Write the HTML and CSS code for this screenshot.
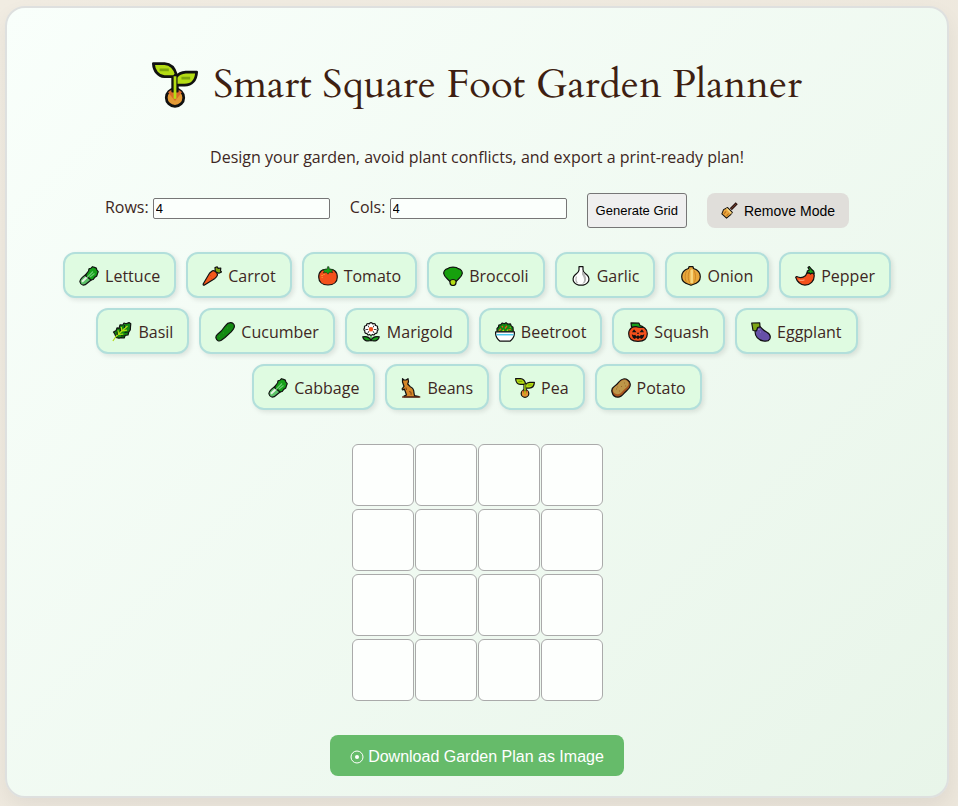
FILE: index.html
```
<!DOCTYPE html>
<html lang="en">
<head>
  <meta charset="UTF-8">
  <meta name="viewport" content="width=device-width, initial-scale=1.0">
  <title>Smart Square Foot Garden Planner</title>
  <link rel="stylesheet" href="styles.css">
</head>
<body>
  <svg class="sprite" aria-hidden="true">
    <symbol id="seedling" viewBox="0 0 20 20">
      <circle cx="10" cy="15.5" r="3.8" fill="#e39a35"/>
      <path d="M7 13.2a4 4 0 0 1 6 0L10 17z" fill="#d9692a" stroke="none"/>
      <path d="M9 6.5v6.2h2V10.3" fill="#b4dc14"/>
      <path d="M.6.7h4.900c2.600.2 4.300 2 5 4.600L9.500 6.400H5.400C2.600 6.200.8 3.800.6.7z" fill="#b4dc14"/>
      <path d="M19.400 4.400h-4.700c-2.200.1-3.400 1-4.200 2.200v3.500h3.700c3.100 0 5-2.200 5.200-5.700z" fill="#b4dc14"/>
      <path d="M10 6.200V16" stroke="#b4dc14" stroke-width="1.200"/>
      <path d="M3.300 3.400h4M12.800 7h3.800" stroke="#7fa60c"/>
    </symbol>
    <symbol id="lettuce" viewBox="0 0 20 20">
      <path d="M1 16c-.5-1.800.6-3 2.300-4.600L8.500 7l5.500 5.500-5.300 4.200c-1.600 1.500-3.200 2.600-5 2.300-1.400-.2-2.400-1.500-2.700-3z" fill="#5ec26a"/>
      <path d="M3 15.700L9 10" stroke="#e8f4e4" stroke-width="2"/>
      <path d="M6.500 9.500L8 7l1.500-2 .5-2.200 2-.6 1.500-1.500 2 .7 1.800.7.600 1.900 1.300 1.700-.8 2.200-.6 2-1.900 1.300-1.700 2.300-2.200.5z" fill="#16a01a"/>
      <path d="M8 11.500L14 5.500M11 11l4.500-3.500" stroke="#6acb72"/>
    </symbol>
    <symbol id="carrot" viewBox="0 0 20 20">
      <path d="M13.300 5.800L13 1.600l2.200-.8 1 1.500 2.600-.3-.3 2.800 1 1.200-2.600 1.300z" fill="#7da514"/>
      <path d="M9.800 5.200c2-1.500 6.400 1.500 5.500 4.200-.3 1-1.400 2.100-2.400 3L2.500 19c-.9.500-1.600-.1-1.200-1.200L7.500 7.200z" fill="#f4581c"/>
      <path d="M8 9.200l1.300.9M10.300 13.300l-1-1.200" stroke="#cf3d10" stroke-width=".7"/>
    </symbol>
    <symbol id="tomato" viewBox="0 0 20 20">
      <path d="M10 3.500c5.500-1.200 9.300 2 9.300 7.500 0 5-3.600 8-9.300 8S.7 16 .7 11c0-5.500 3.800-8.700 9.300-7.500z" fill="#f4501c"/>
      <path d="M9.200 3L9.500.7h1.500L11.300 3l4 .5-1.500 1.500 1 1.600-3.300-.4L10 8.200 8.300 6.300l-3 .8.900-2-1.500-1.300z" fill="#16a01a" stroke-width=".5"/>
      <path d="M3.500 9.500h1.200M5.500 8.300h1M3.700 11.500h.8" stroke="#ffb43c"/>
    </symbol>
    <symbol id="broccoli" viewBox="0 0 20 20">
      <path d="M4.800 2.600C6.500.6 13.500.6 15.200 2.600 18 3 19.600 5.500 19.200 7.800 19 10.300 16.500 12 14.500 14l-2 2h-5L5.500 14C3.500 12 1 10.300.8 7.800.4 5.500 2 3 4.800 2.600z" fill="#16a00d"/>
      <path d="M7 15c1-2 5-2 6 0v1.500a3 3 0 0 1-6 0z" fill="#b4dc14"/>
    </symbol>
    <symbol id="garlic" viewBox="0 0 20 20">
      <path d="M8 .7h4V4c.2 2.500 2 3.300 4 5 2.300 2 2.500 5.500.8 7.300C15.500 18 12.500 19.200 10 19.200S4.500 18 3.200 16.300C1.500 14.500 1.700 11 4 9c2-1.700 3.800-2.500 4-5z" fill="#fff"/>
      <path d="M14.300 9.500c1.500 3 1 5.800-.8 7.500l-2.500 1c3-2.500 2.500-6 0-9.500V4z" fill="#b4b4b4" stroke="none"/>
      <path d="M5.500 10.500c-1 2.500-.5 5 1 6.500" stroke="#b4b4b4"/>
    </symbol>
    <symbol id="onion" viewBox="0 0 20 20">
      <path d="M8 .7h4l.5 1.800c4 1.200 6.800 4.500 6.800 8.300 0 4-3 6.700-7.300 7.700l-2 .8-2-.8C3.700 17.500.7 14.800.7 10.800c0-3.800 2.800-7.100 6.800-8.300z" fill="#e8a83c"/>
      <path d="M9.500 3C6.500 7.500 6.500 13.500 9.500 18M13 4.500c2 3.500 2 9 0 12.500M6 4.500c-2.500 3.500-2.500 9 0 12.500" stroke="#c77e1e" stroke-width=".8"/>
      <path d="M10.700 3.500V17" stroke="#f8d77e" stroke-width="2.500"/>
    </symbol>
    <symbol id="pepper" viewBox="0 0 20 20">
      <path d="M.7 11.300l1-.8c3 1.500 6.500 1 8.700-.7 1.200-1.200 1.100-3 2.300-3.900 2-1.200 6.300.2 6.500 3.500.3 5.500-4 9.700-9.300 9.700-4.300 0-8-3.600-9.200-7.800z" fill="#f4501c"/>
      <path d="M12.300 7.200V5l2-1L13 1.400 14.300.6l2.500 3c1.700.9 2.600 2.500 2.300 4.200l-2-.8-1.600 1.100-1.400-1.300z" fill="#16a01a"/>
      <path d="M3.500 13.700c1.500.8 4 1 6 0" stroke="#ff9468"/>
    </symbol>
    <symbol id="basil" viewBox="0 0 20 20">
      <path d="M4 15.500l-.8-2.700L1.500 10l2.700-1.500.8-2.700 2 .5 1-3.500 2.800.2L12 1l2 .7L17 .6l1.800 1.200-.3 3-.2 3-1.500 2.200-.8 3-2.800.3-1 2.700-3-.3L7 16.200z" fill="#138a12"/>
      <path d="M.9 19l3-4.500L15.500 4M6.500 12.300l-.5-4M9.800 9l-.5-4M6.800 12.500l4.500-.3M10.500 8.800l4.500-.6" stroke="#b4dc14"/>
      <path d="M5 9.500l.3 3.500M8 6l.5 3M12.500 3l-.2 3M9 13.800l3.500.2M12.500 10.500l4-.5" stroke-width=".9"/>
    </symbol>
    <symbol id="cucumber" viewBox="0 0 20 20">
      <path d="M1 16.200c-.5-1.800.4-3 1.600-4L6.300 9 10.500 3.600c1.200-1.700 3.300-3.100 5.500-2.900 2.400.2 3.900 2.300 3.200 4.700-.6 1.900-2 3.200-3.300 4.700L10 15.500l-3.700 2.800c-2.300 1.500-4.700.4-5.300-2.100z" fill="#138a12"/>
      <path d="M4.500 14.200h.5M8 11h.5M12 6h.5" stroke="#62bc4d" stroke-width=".7"/>
    </symbol>
    <symbol id="marigold" viewBox="0 0 20 20">
      <path d="M10 12v6" stroke="#16a01a"/>
      <path d="M10 18.500c-4.500 1.300-8-.5-8.300-3.700 4-.7 7 .4 8.300 3.700zM10 18.500c4.500 1.300 8-.5 8.300-3.700-4-.7-7 .4-8.300 3.700z" fill="#16a01a"/>
      <path d="M8.300 1.800Q10-.4 11.700 1.800q2.800-.8 2.800 1.700 2.900.3 1.900 2.500 1.500 1.500-.2 2.800.4 2.700-2.200 2.700-.8 2.300-2.700 1-1.300 1.700-2.600 0-1.900 1.300-2.700-1-2.600 0-2.200-2.700Q2.100 7.500 3.600 6q-1-2.200 1.900-2.500 0-2.500 2.800-1.700z" fill="#fff"/>
      <path d="M7 3.500l1 2M13 3.500l-1 2M4.500 7.500h2.500M13 7.500h2.500M7 11l1-2M13 11l-1-2" stroke-width=".8"/>
      <circle cx="10" cy="7.200" r="2.200" fill="#f4501c" stroke="none"/>
    </symbol>
    <symbol id="beetroot" viewBox="0 0 20 20">
      <path d="M2 10V6.500L3.500 5 3.800 3l2-.3L7.300 1l2 .8L11 .7l2 1.500 2.500-.3.700 2L18 5.300 18.300 10z" fill="#138a12"/>
      <path d="M4 8.700l2-2M10 6.500l2-2.700M13.500 8l2.300-.7M7 4l.8 1.300" stroke="#f4581c" stroke-width="1.300"/>
      <path d="M7.500 9l1.500-1M12 9l1-1.500M15 5l.5.5" stroke="#b4dc14"/>
      <path d="M.6 9.800h18.800c.3 4.200-1.400 7.300-4.400 9.400H5C2 17.100.3 14 .6 9.800z" fill="#fff"/>
      <path d="M1.400 12.700h17.200" stroke="#48c8ec" stroke-width="1.500"/>
    </symbol>
    <symbol id="squash" viewBox="0 0 20 20">
      <path d="M10 4.500c5.500-.8 9.300 2.200 9.300 7.200s-3.800 7.600-9.300 7.600S.7 16.700.7 11.700 4.500 3.700 10 4.500z" fill="#f4501c"/>
      <path d="M3 .9l8 .3 1 2.300c1.500.3 2.700.8 3.300 2-3.300 0-5.800-.2-7.500-1L3.500 5z" fill="#16a01a"/>
      <path d="M6 7.300l2.500 3H4zM14 7.300l2 3h-4.500zM10 10l1 2H9zM3.800 12.300l2 1 1.500-.5 1 1.700 1.700-1.200 1.800 1.200 1-1.700 1.500.5 2-1c-.3 2.700-1.500 4.200-3.300 4.700l-1-1.500-2 1.700-2-1.700-1 1.500c-1.800-.5-2.900-2-3.200-4.700z" fill="#111" stroke="none"/>
    </symbol>
    <symbol id="eggplant" viewBox="0 0 20 20">
      <path d="M5 5.500C7 3.300 9.300 4.500 10.800 6.300c1.500 1.800 3 2.700 5.100 3.900 3.200 1.800 4 4.100 2.900 6.800-1 2-3.200 2.400-5.600 2.100C7.500 18.500 3.200 14 4.200 8z" fill="#6650a8"/>
      <path d="M.7 1L8.700.9 9 4.800 6.600 5.500 5.500 8.800 2 8.500l-.5-3z" fill="#7da514"/>
      <path d="M7.500 7.500h.8M9 10h.5" stroke="#c2b4f0"/>
    </symbol>
    <symbol id="beans" viewBox="0 0 20 20">
      <path d="M1.500.7L3 2h2L7 .7 7.500 3.800 6.700 6l2.500 2.700c2.500 1 3.800 3.500 3.800 6.300l.5 2.700 4.500.8v.5H3v-1l2.500-1-1.200-3.500L3.300 11l-1.500 1L1 11l2-2.700L1.500 4z" fill="#d68628"/>
      <path d="M5 9.500L5.500 12M8 13.500c1.700 0 2.500 1.200 2 3.500" stroke="#8c4b18"/>
      <path d="M1 19h18.300" stroke="#6a2b15" stroke-width="1.300"/>
    </symbol>
    <symbol id="potato" viewBox="0 0 20 20">
      <path d="M1 14c-.6-2.300.2-4.200 2-5.300 2.500-1.600 3.700-3.200 5.300-5.200C10.500.8 14 .1 16.700 2c2.800 2 3.300 5.300 1.500 8-1.400 2-3.500 3.400-5 5.200-1.600 2-3.500 4-6.300 4-3 0-5.200-2.200-5.900-5.200z" fill="#a9561f"/>
      <path d="M2 12.500c.1-3.800 3.500-3.900 5.500-6.700C9.300 3.300 11.500 1.500 14 2c3 .6 4.500 3.200 3.200 5.500-1.300 2.200-3.600 3.300-5.400 5.400-1.600 1.900-3.300 3.600-5.800 3.300-2-.2-3.900-1.700-4-3.700z" fill="#bd9648" stroke="none"/>
      <path d="M5 11h.6M8 13h.6M10 8.500h.6M13 5h.6M14.500 8h.6M6.500 9h.6" stroke="#8c4b18"/>
    </symbol>
    <symbol id="broom" viewBox="0 0 20 20">
      <path d="M11.500 8.500L18.500 1.500" stroke="#2c1714" stroke-width="3.500"/>
      <path d="M12 8L18 2" stroke="#7d3f26" stroke-width="1"/>
      <path d="M7.800 6.500l5.500 5.700-1.800 2.600L6.500 19 1 14l2-5z" fill="#eba63c"/>
      <path d="M6.500 7.500l5.800 6" stroke="#f7dc8e" stroke-width="1.500"/>
      <path d="M3.500 14l2.500-3M6.500 16.300L9 13.500" stroke="#b96e1c"/>
    </symbol>
  </svg>

  <div class="container">
    <h1><svg><use href="#seedling"/></svg>Smart Square Foot Garden Planner</h1>
    <p class="intro">Design your garden, avoid plant conflicts, and export a print-ready plan!</p>

    <div class="controls">
      <label>Rows: <input type="number" id="rows" value="4" min="1"></label>
      <label>Cols: <input type="number" id="cols" value="4" min="1"></label>
      <button class="generate" onclick="generateGrid()">Generate Grid</button>
      <button class="remove"><svg><use href="#broom"/></svg>Remove Mode</button>
    </div>

    <div class="plants">
      <button class="plant"><svg><use href="#lettuce"/></svg>Lettuce</button>
      <button class="plant"><svg><use href="#carrot"/></svg>Carrot</button>
      <button class="plant"><svg><use href="#tomato"/></svg>Tomato</button>
      <button class="plant"><svg><use href="#broccoli"/></svg>Broccoli</button>
      <button class="plant"><svg><use href="#garlic"/></svg>Garlic</button>
      <button class="plant"><svg><use href="#onion"/></svg>Onion</button>
      <button class="plant"><svg><use href="#pepper"/></svg>Pepper</button>
      <button class="plant"><svg><use href="#basil"/></svg>Basil</button>
      <button class="plant"><svg><use href="#cucumber"/></svg>Cucumber</button>
      <button class="plant"><svg><use href="#marigold"/></svg>Marigold</button>
      <button class="plant"><svg><use href="#beetroot"/></svg>Beetroot</button>
      <button class="plant"><svg><use href="#squash"/></svg>Squash</button>
      <button class="plant"><svg><use href="#eggplant"/></svg>Eggplant</button>
      <button class="plant"><svg><use href="#lettuce"/></svg>Cabbage</button>
      <button class="plant"><svg><use href="#beans"/></svg>Beans</button>
      <button class="plant"><svg><use href="#seedling"/></svg>Pea</button>
      <button class="plant"><svg><use href="#potato"/></svg>Potato</button>
    </div>

    <div class="grid" id="grid"></div>

    <button class="download">
      <svg viewBox="0 0 14 14"><circle cx="7" cy="7" r="6"/><circle class="dot" cx="7" cy="7" r="2"/></svg>
      Download Garden Plan as Image
    </button>
  </div>

  <script>
    function generateGrid() {
      const rows = Number(document.getElementById('rows').value);
      const cols = Number(document.getElementById('cols').value);
      const grid = document.getElementById('grid');
      grid.innerHTML = '';
      grid.style.setProperty('--cols', cols);
      for (let i = 0; i < rows * cols; i++) {
        const cell = document.createElement('button');
        cell.className = 'cell';
        grid.appendChild(cell);
      }
    }

    generateGrid();
  </script>
</body>
</html>
```
FILE: styles.css
```
* {
  box-sizing: border-box;
}
body {
  margin: 0;
  padding: 6px 9px 8px 5px;
  background: linear-gradient(135deg, #f1ece2, #ece6db);
  color: #3e2723;
  font-family: "Segoe UI", "Open Sans", sans-serif;
  font-size: 16px;
  line-height: 27px;
}
.sprite {
  position: absolute;
  width: 0;
  height: 0;
}
symbol {
  fill: none;
  stroke: #111;
  stroke-width: 1.2;
  stroke-linejoin: round;
}
.container {
  display: flex;
  flex-direction: column;
  align-items: center;
  padding: 40px 40px 20px;
  border: 2px solid #dee0df;
  border-radius: 20px;
  background: linear-gradient(135deg, #f9fffb, #e8f5e9);
  box-shadow: 0 8px 20px rgba(0, 0, 0, 0.06);
}
h1 {
  display: flex;
  align-items: center;
  gap: 15px;
  margin: 0 0 22px;
  color: #3e1f12;
  font-family: Cardo, "EB Garamond", "Cormorant Garamond", "Liberation Serif", serif;
  font-size: 40px;
  font-weight: 400;
  line-height: 74px;
}
h1 svg {
  width: 46px;
  height: 46px;
}
.intro {
  margin: 0 0 22px;
  text-align: center;
}
.controls {
  display: flex;
  flex-wrap: wrap;
  justify-content: center;
  gap: 20px;
  margin-bottom: 24px;
  line-height: 29px;
}
.controls input {
  width: 177px;
  height: 21px;
  padding: 1px 2px;
  border: 1px solid #767676;
  border-radius: 2px;
  background: #fbfffc;
  font: 13px "Liberation Sans", sans-serif;
}
button {
  font-family: Arial, "Liberation Sans", sans-serif;
  cursor: pointer;
}
.generate {
  height: 35px;
  padding: 0 8px;
  border: 1px solid #767676;
  border-radius: 3px;
  background: #efefef;
  color: #000;
  font-size: 13px;
}
.remove {
  display: flex;
  align-items: center;
  gap: 6px;
  height: 35px;
  padding: 0 14px;
  border: none;
  border-radius: 8px;
  background: #e0deda;
  color: #000;
  font-size: 14px;
}
.remove svg {
  width: 17px;
  height: 17px;
}
.plants {
  display: flex;
  flex-wrap: wrap;
  justify-content: center;
  gap: 10px;
  margin-bottom: 34px;
}
.plant {
  display: flex;
  align-items: center;
  gap: 6px;
  padding: 11px 14px 9px;
  border: 2px solid #b2dfdb;
  border-radius: 12px;
  background: #dffbe1;
  box-shadow: 2px 2px 5px rgba(0, 0, 0, 0.1);
  color: #3e2723;
  font-family: "Segoe UI", "Open Sans", sans-serif;
  font-size: 16px;
  line-height: 22px;
}
.plant svg {
  width: 20px;
  height: 20px;
}
.grid {
  display: grid;
  grid-template-columns: repeat(var(--cols), 62px);
  gap: 3px 1px;
  margin-bottom: 34px;
}
.cell {
  height: 62px;
  padding: 0;
  border: 1px solid #aaa;
  border-radius: 6px;
  background: #fdfffd;
}
.download {
  display: flex;
  align-items: center;
  gap: 4px;
  height: 41px;
  padding: 2px 20px 0;
  border: none;
  border-radius: 8px;
  background: #66bb6a;
  color: #fff;
  font-size: 16px;
}
.download svg {
  width: 14px;
  height: 14px;
  fill: none;
  stroke: #fff;
}
.download .dot {
  fill: #fff;
  stroke: none;
}
```
